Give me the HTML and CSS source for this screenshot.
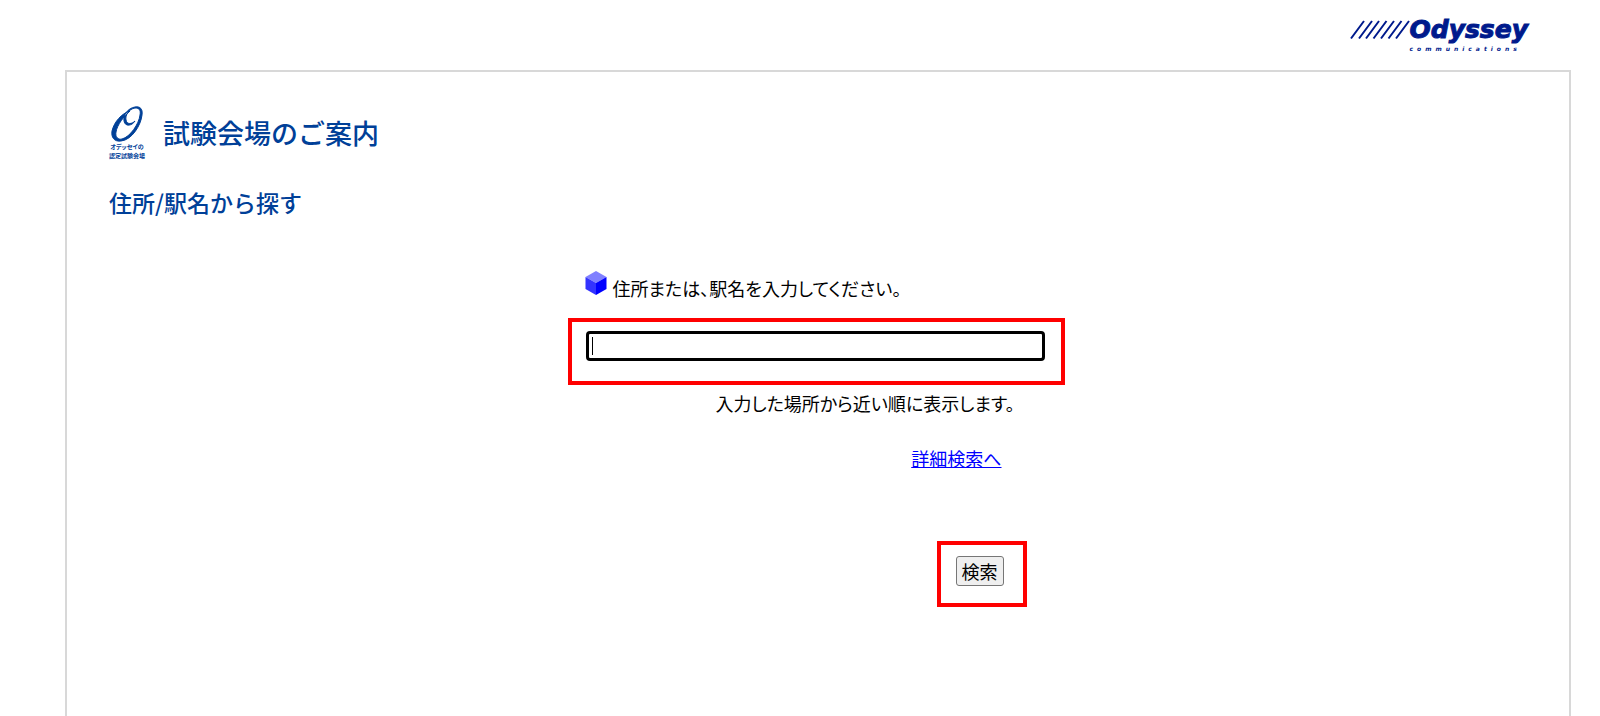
FILE: index.html
```
<!DOCTYPE html>
<html lang="ja">
<head>
    <meta charset="UTF-8">
    <meta name="viewport" content="width=device-width, initial-scale=1.0">
    <title>試験会場のご案内</title>
    <link rel="stylesheet" href="styles.css">
</head>
<body>
    <header class="header">
        <a class="logo" href="#">
            <svg class="logo-lines" width="60" height="20" viewBox="0 0 60 20" aria-hidden="true">
                <path d="M1 18.500L14 1M9 18.500L22 1M16 18.500L29 1M23.500 18.500L36.500 1M31 18.500L44 1M38.500 18.500L51.500 1M46 18.500L59 1"/>
            </svg>
            <span class="logo-text">
                <span class="logo-name">Odyssey</span>
                <span class="logo-sub">communications</span>
            </span>
        </a>
    </header>

    <main class="contents">
        <div class="title">
            <div class="mark">
                <svg width="32" height="36" viewBox="0 0 32 36" aria-hidden="true">
                    <path fill-rule="evenodd" d="M24 1C29 0 32 3 31 9C30 19 21 34 10 35C3 36 0 31 1 25C3 16 11 7 19 5C13 10 6 19 5 26C4 31 7 34 11 33C19 31 28 18 29 9C30 4 28 2 24 2C18 3 14 9 15 14C16 19 21 18 24 15C21 20 14 21 13 15C12 9 17 2 24 1Z"/>
                </svg>
                <span class="mark-text">オデッセイの</span>
                <span class="mark-text">認定試験会場</span>
            </div>
            <h1>試験会場のご案内</h1>
        </div>
        <h2>住所/駅名から探す</h2>

        <form class="search">
            <label class="search-label" for="place">
                <svg width="22" height="24" viewBox="0 0 22 24" aria-hidden="true">
                    <path fill="#8080ff" d="M11 0L21.500 6L11 12L0.500 6Z"/>
                    <path fill="#3333ff" d="M0.500 6L11 12V24L0.500 18Z"/>
                    <path fill="#0000ff" d="M21.500 6L11 12V24L21.500 18Z"/>
                </svg>
                <span>住所または、駅名を入力してください。</span>
            </label>
            <div class="frame frame-input">
                <input type="text" id="place" name="place" class="place" autofocus>
            </div>
            <p class="note">入力した場所から近い順に表示します。</p>
            <a class="detail" href="#">詳細検索へ</a>
            <div class="frame frame-button">
                <button type="submit" class="button">検索</button>
            </div>
        </form>
    </main>
</body>
</html>
```
FILE: styles.css
```
* {
  box-sizing: border-box;
}

body {
  margin: 0;
  background: #fff;
  color: #000;
  font-family: "Noto Sans CJK JP", sans-serif;
  font-size: 18px;
  line-height: 24px;
  font-feature-settings: "palt";
}

.header {
  display: flex;
  justify-content: flex-end;
  height: 70px;
  padding: 15px 72px 0 0;
}

.logo {
  display: flex;
  color: #001a8c;
  text-decoration: none;
}

.logo-lines {
  margin-top: 5px;
  fill: none;
  stroke: #001a8c;
  stroke-width: 2;
}

.logo-text {
  display: flex;
  flex-direction: column;
  font-family: "DejaVu Sans", sans-serif;
  font-style: italic;
  font-weight: bold;
}

.logo-name {
  font-size: 25px;
  line-height: 30px;
  -webkit-text-stroke: 1px #001a8c;
}

.logo-sub {
  font-size: 6px;
  line-height: 8px;
  letter-spacing: 4px;
}

.contents {
  min-height: calc(100vh - 70px);
  margin: 0 29px 0 65px;
  padding: 34px 46px 0 42px;
  border: 2px solid #d8d8d8;
  border-bottom: none;
}

.title {
  display: flex;
  align-items: center;
  gap: 18px;
  color: #004098;
}

.mark {
  display: flex;
  flex-direction: column;
  align-items: center;
  fill: #004098;
  stroke: #004098;
}

.mark-text {
  font-size: 6px;
  font-weight: bold;
  line-height: 9px;
}

h1,
h2 {
  margin: 0;
  color: #004098;
  font-weight: 500;
  font-feature-settings: normal;
}

h1 {
  font-size: 27px;
  line-height: 36px;
}

h2 {
  margin-top: 26px;
  font-size: 23px;
  line-height: 32px;
}

.search {
  display: flex;
  flex-direction: column;
  align-items: flex-end;
  max-width: 497px;
  margin: 53px auto 0;
}

.search-label {
  display: flex;
  align-items: flex-end;
  align-self: flex-start;
  gap: 6px;
  padding-left: 17px;
}

.search-label svg {
  margin-bottom: 5px;
}

.frame {
  border: 4px solid #f00;
}

.frame-input {
  width: 100%;
  margin: 18px 0 6px;
  padding: 9px 16px 20px 14px;
}

/* thin bar at the left is the text cursor */
.place {
  display: block;
  width: 100%;
  height: 30px;
  padding: 2px 4px;
  border: 3px solid #000;
  border-radius: 4px;
  outline: none;
  background: linear-gradient(#000, #000) 3px center / 1px 18px no-repeat;
  caret-color: transparent;
  font: inherit;
}

.note {
  margin: 0 50px 31px 0;
}

.detail {
  margin: 0 63px 71px 0;
  color: #00f;
}

.frame-button {
  margin-right: 38px;
  padding: 11px 19px 17px 15px;
}

.button {
  display: block;
  height: 30px;
  padding: 0 5px;
  border: 1px solid #767676;
  border-radius: 3px;
  background: #efefef;
  color: #000;
  font: inherit;
}
```
